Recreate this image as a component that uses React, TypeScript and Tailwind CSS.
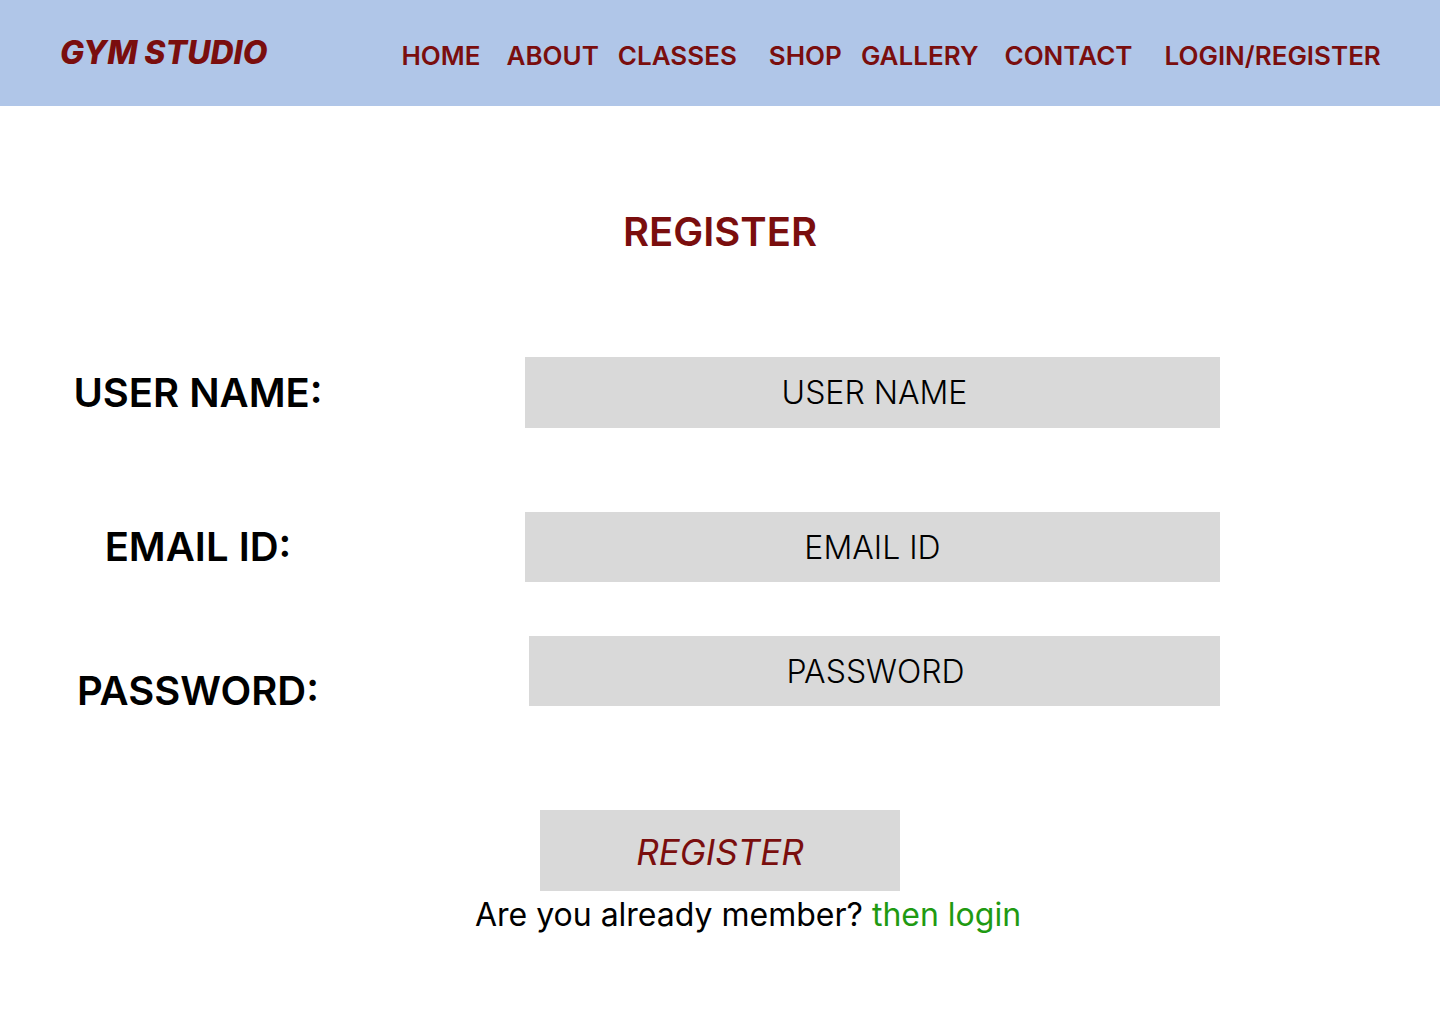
import React from "react";

const navItems = [
  { label: "HOME", cls: "ml-0" },
  { label: "ABOUT", cls: "ml-[26px]" },
  { label: "CLASSES", cls: "ml-[19px]" },
  { label: "SHOP", cls: "ml-[32px]" },
  { label: "GALLERY", cls: "ml-[19px]" },
  { label: "CONTACT", cls: "ml-[26px]" },
  { label: "LOGIN/REGISTER", cls: "ml-[32px]" },
];

export default function App() {
  return (
    <div className="min-h-screen bg-white font-['Inter',sans-serif] text-black">
      {/* HEADER */}
      <header className="flex h-[106px] items-center bg-[#b0c6e8] px-[60px]">
        <span className="shrink-0 whitespace-nowrap text-[32px] font-extrabold italic leading-none text-[#7a0e0e]">
          GYM STUDIO
        </span>
        <nav className="ml-[134px] flex shrink-0 items-center whitespace-nowrap pt-[6px]">
          {navItems.map((item) => (
            <a
              key={item.label}
              href="#"
              className={`${item.cls} text-[26px] font-semibold leading-none text-[#7a0e0e]`}
            >
              {item.label}
            </a>
          ))}
        </nav>
      </header>

      <main className="flex flex-col">
        {/* TITLE */}
        <h1 className="mt-[102px] text-center text-[40px] font-semibold leading-[48px] text-[#7a0e0e]">
          REGISTER
        </h1>

        {/* FORM */}
        <form className="flex flex-col">
          <div className="mt-[101px] flex items-center">
            <label className="w-[396px] text-center text-[40px] font-semibold leading-[48px]">
              USER NAME:
            </label>
            <input
              placeholder="USER NAME"
              className="ml-[129px] h-[71px] w-[695px] bg-[#d9d9d9] pl-[4px] text-center text-[32px] font-light outline-none placeholder:text-black"
            />
          </div>

          <div className="mt-[84px] flex items-center">
            <label className="w-[396px] text-center text-[40px] font-semibold leading-[48px]">
              EMAIL ID:
            </label>
            <input
              placeholder="EMAIL ID"
              className="ml-[129px] h-[70px] w-[695px] bg-[#d9d9d9] text-center text-[32px] font-light outline-none placeholder:text-black"
            />
          </div>

          <div className="mt-[54px] flex items-start">
            <label className="mt-[31px] w-[396px] text-center text-[40px] font-semibold leading-[48px]">
              PASSWORD:
            </label>
            <input
              type="password"
              placeholder="PASSWORD"
              className="ml-[133px] h-[70px] w-[691px] bg-[#d9d9d9] pl-[2px] text-center text-[32px] font-light outline-none placeholder:text-black"
            />
          </div>

          <button
            type="button"
            className="mx-auto mt-[95px] h-[81px] w-[360px] bg-[#d9d9d9] pt-[4px] text-[35px] italic text-[#7a0e0e]"
          >
            REGISTER
          </button>
        </form>

        <p className="ml-[56px] mt-[6px] text-center text-[32px] leading-[36px]">
          Are you already member?{" "}
          <a href="#" className="text-[#1f9a12]">
            then login
          </a>
        </p>
      </main>
    </div>
  );
}
